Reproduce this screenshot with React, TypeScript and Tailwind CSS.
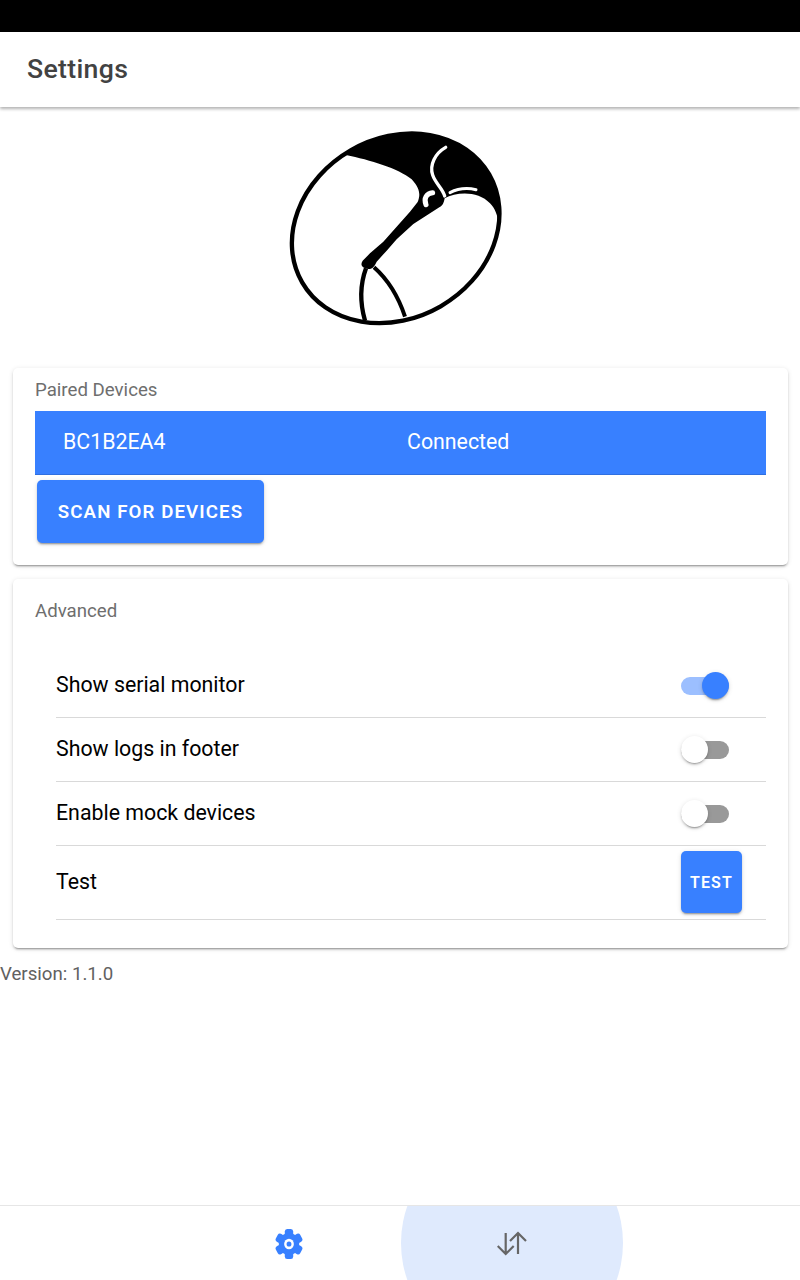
function Logo() {
  return (
    <svg width="250" height="220" viewBox="0 0 750 660">
      <defs>
        <clipPath id="logo-clip">
          <ellipse cx="377" cy="325" rx="324" ry="270" transform="rotate(-30 377 325)" />
        </clipPath>
      </defs>
      <path
        clipPath="url(#logo-clip)"
        d="M228 105 C300 120 385 145 425 178 C450 205 452 225 443 246 L420 275 L380 320 L340 365 L300 400 L278 422 C270 434 275 444 296 447 C308 447 314 438 320 425 L350 392 L380 358 L430 312 L508 262 C520 256 522 245 524 235 C560 215 625 212 660 250 C675 265 682 285 686 310 L780 310 L780 0 L228 0 Z"
        fill="#000"
      />
      <ellipse cx="377" cy="325" rx="324" ry="270" transform="rotate(-30 377 325)" fill="none" stroke="#000" strokeWidth="13" />
      <path d="M527 82 C495 100 478 135 488 165 C496 190 518 205 524 228" fill="none" stroke="#fff" strokeWidth="10" strokeLinecap="round" />
      <path d="M540 218 C565 205 595 204 618 209" fill="none" stroke="#fff" strokeWidth="9" strokeLinecap="round" />
      <path d="M488 218 C470 220 460 235 468 254" fill="none" stroke="#fff" strokeWidth="15" strokeLinecap="round" />
      <path d="M288 445 C268 500 270 550 285 602" fill="none" stroke="#000" strokeWidth="13" />
      <path d="M312 442 C355 480 385 530 405 590" fill="none" stroke="#000" strokeWidth="12" />
    </svg>
  );
}

function GearIcon() {
  return (
    <svg className="mt-px" width="28" height="30" viewBox="0 0 30 30" preserveAspectRatio="none" fill="#3880ff">
      <circle cx="15" cy="15" r="11" />
      {[0, 60, 120, 180, 240, 300].map((angle) => (
        <rect key={angle} x="10.5" y="0" width="9" height="7" rx="2.5" transform={`rotate(${angle} 15 15)`} />
      ))}
      <circle cx="15" cy="15" r="5.2" fill="#fff" />
      <circle cx="15" cy="15" r="2.6" />
    </svg>
  );
}

function Toggle({ on }: { on: boolean }) {
  return (
    <div className={`relative w-12 h-[18px] rounded-full ${on ? 'bg-[#9cbfff]' : 'bg-[#999999]'}`}>
      <div
        className={`absolute top-[-4.5px] w-[27px] h-[27px] rounded-full shadow-[0_3px_1px_-2px_rgba(0,0,0,0.2),0_2px_2px_0_rgba(0,0,0,0.14),0_1px_5px_0_rgba(0,0,0,0.12)] ${on ? 'right-0 bg-[#3880ff]' : 'left-0 bg-white'}`}
      />
    </div>
  );
}

function SettingRow({ label, on }: { label: string; on: boolean }) {
  return (
    <div className="h-16 flex items-center justify-between border-b border-[#d9d9d9] pr-[37px]">
      <span className="-mt-0.5 text-[21.33px] text-black">{label}</span>
      <Toggle on={on} />
    </div>
  );
}

const cardClass =
  'ml-[13px] mr-3 bg-white rounded-[5px] shadow-[0_3px_1px_-2px_rgba(0,0,0,0.2),0_2px_2px_0_rgba(0,0,0,0.14),0_1px_5px_0_rgba(0,0,0,0.12)]';
const buttonClass =
  'bg-[#3880ff] text-white font-semibold rounded-[5px] tracking-[1.1px] shadow-[0_3px_1px_-2px_rgba(0,0,0,0.2),0_2px_2px_0_rgba(0,0,0,0.14),0_1px_5px_0_rgba(0,0,0,0.12)]';

export default function App() {
  return (
    <div className="relative h-[1280px] w-[800px] flex flex-col bg-white overflow-hidden font-['Roboto',sans-serif]">
      <div className="h-8 bg-black" />

      {/* Toolbar */}
      <header className="h-[75px] flex items-center pl-[27px] pb-0.5 bg-white shadow-[0_2px_3px_rgba(0,0,0,0.3)] z-10">
        <h1 className="text-[26.67px] font-medium text-[#424242] tracking-[0.33px]">Settings</h1>
      </header>

      <main className="flex-1">
        <div className="h-[261px] flex justify-center pt-[13px] pr-[10px]">
          <Logo />
        </div>

        {/* Paired devices */}
        <section className={`${cardClass} h-[197px] pt-[10px] px-[22px]`}>
          <h2 className="text-[18.67px] leading-[24px] text-[#6e6e6e]">Paired Devices</h2>
          <div className="mt-[9px] h-16 flex items-center pb-0.5 bg-[#3880ff] border-b border-[#2f6fe0] text-white text-[21.33px]">
            <span className="w-[372px] pl-7 shrink-0">BC1B2EA4</span>
            <span>Connected</span>
          </div>
          <button className={`${buttonClass} ml-0.5 mt-[5px] w-[227px] h-[63px] text-[18.67px]`}>SCAN FOR DEVICES</button>
        </section>

        {/* Advanced */}
        <section className={`${cardClass} mt-[14px] h-[369px] pt-5 px-[22px]`}>
          <h2 className="text-[18.67px] leading-[24px] text-[#6e6e6e]">Advanced</h2>
          <div className="mt-[31px] ml-[21px]">
            <SettingRow label="Show serial monitor" on />
            <SettingRow label="Show logs in footer" on={false} />
            <SettingRow label="Enable mock devices" on={false} />
            <div className="h-[74px] flex items-center justify-between border-b border-[#d9d9d9] pr-6">
              <span className="-mt-0.5 text-[21.33px] text-black">Test</span>
              <button className={`${buttonClass} -mt-0.5 pt-0.5 w-[61px] h-[62px] text-base`}>TEST</button>
            </div>
          </div>
        </section>

        <p className="mt-[14px] text-[18.67px] leading-[24px] text-[#616161]">Version: 1.1.0</p>
      </main>

      {/* Tab bar */}
      <nav className="relative h-[75px] flex pl-[178px] border-t border-[#e6e6e6] bg-white overflow-hidden">
        <button className="w-[222px] flex items-center justify-center">
          <GearIcon />
        </button>
        <button className="relative ml-px w-[222px] flex items-center justify-center">
          <span className="absolute left-0 top-[-74px] w-[222px] h-[222px] rounded-full bg-[#dfeafd]" />
          <svg className="relative mt-0.5" width="30" height="30" viewBox="0 0 30 30" fill="none" stroke="#666" strokeWidth="2.2">
            <path d="M8.7 4 V25 M0.7 17 L8.7 25 L16.7 17" />
            <path d="M21 25 V4 M13 12 L21 4 L29 12" />
          </svg>
        </button>
      </nav>
    </div>
  );
}
